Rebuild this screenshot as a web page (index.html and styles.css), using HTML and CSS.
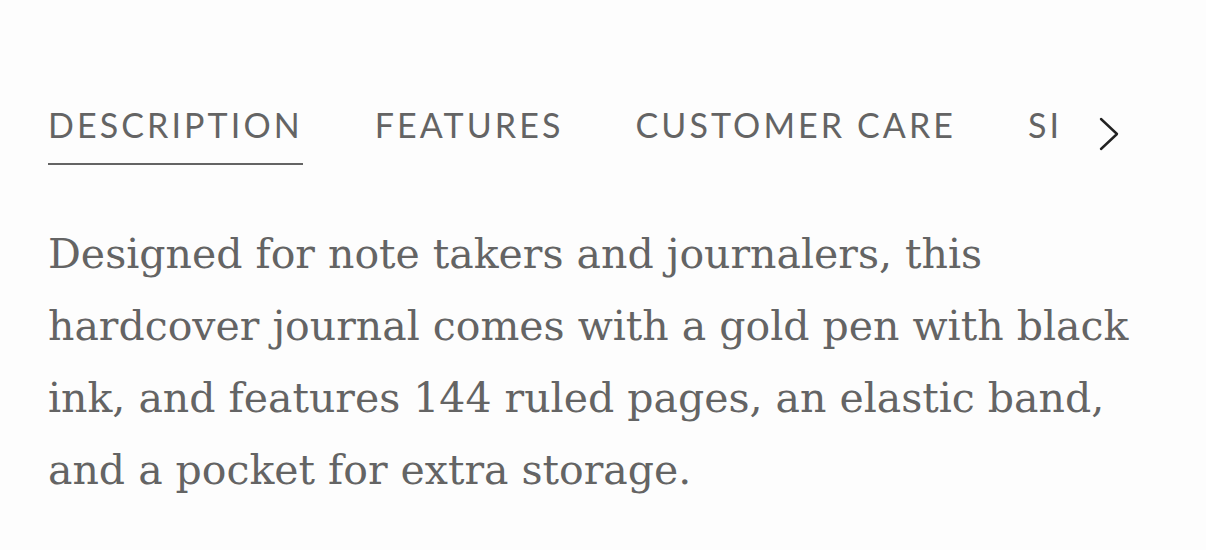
FILE: index.html
```html
<!DOCTYPE html>
<html lang="en">
<head>
    <meta charset="UTF-8">
    <meta name="viewport" content="width=device-width, initial-scale=1.0">
    <title>Hardcover Journal</title>
    <link rel="stylesheet" href="styles.css">
</head>
<body>
    <section class="product-tabs">
        <div class="tab-strip">
            <nav class="tab-list">
                <button class="tab active">Description</button>
                <button class="tab">Features</button>
                <button class="tab">Customer Care</button>
                <button class="tab">Size</button>
            </nav>
            <button class="tab-next" aria-label="More tabs">
                <svg width="24" height="36" viewBox="0 0 24 36">
                    <path d="M4 3 L20 18 L4 33" fill="none" stroke="#222" stroke-width="2.4" stroke-linecap="round" stroke-linejoin="round"/>
                </svg>
            </button>
        </div>

        <p class="tab-panel">
            Designed for note takers and journalers, this hardcover journal comes with a gold pen with black ink, and features 144 ruled pages, an elastic band, and a pocket for extra storage.
        </p>
    </section>
</body>
</html>
```

FILE: styles.css
```css
:root {
    --page-bg: #fdfdfd;
    --text-grey: #646464;
    --icon-dark: #222222;
}

body {
    margin: 0;
    background: var(--page-bg);
    color: var(--text-grey);
}

.product-tabs {
    padding: 105px 48px 0 48px;
}

/* 标签栏 */
.tab-strip {
    display: flex;
    align-items: flex-start;
}

.tab-list {
    display: flex;
    gap: 72px;
    width: 1012px;
    overflow: hidden;
    white-space: nowrap;
}

.tab {
    flex: none;
    background: none;
    border: none;
    border-bottom: 2px solid transparent;
    padding: 0 0 18px 0;
    font: 400 34px/40px 'Lato', sans-serif;
    letter-spacing: 3.1px;
    text-transform: uppercase;
    color: var(--text-grey);
    cursor: pointer;
}

.tab.active {
    border-bottom-color: var(--text-grey);
}

.tab-next {
    flex: none;
    width: 98px;
    height: 58px;
    padding: 0;
    display: flex;
    justify-content: center;
    align-items: center;
    background: var(--page-bg);
    border: none;
    cursor: pointer;
}

/* 正文 */
.tab-panel {
    margin: 53px 0 0 0;
    max-width: 1100px;
    font: 400 41px/72px 'DejaVu Serif', serif;
    color: var(--text-grey);
}
```
